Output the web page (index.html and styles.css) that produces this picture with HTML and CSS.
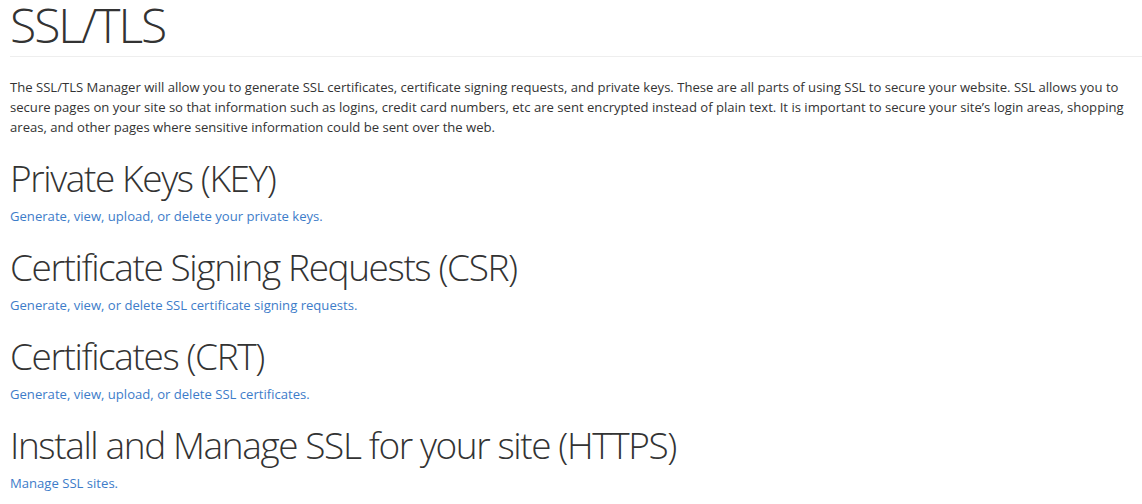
FILE: index.html
```html
<!DOCTYPE html>
<html lang="en">
<head>
  <meta charset="UTF-8" />
  <title>SSL/TLS</title>
  <link rel="stylesheet" href="styles.css">
</head>
<body>
  <div class="page">
    <h1 class="page-title">SSL/TLS</h1>
    <p class="intro">The SSL/TLS Manager will allow you to generate SSL certificates, certificate signing requests, and private keys. These are all parts of using SSL to secure your website. SSL allows you to secure pages on your site so that information such as logins, credit card numbers, etc are sent encrypted instead of plain text. It is important to secure your site’s login areas, shopping areas, and other pages where sensitive information could be sent over the web.</p>

    <div class="section">
      <h2>Private Keys (KEY)</h2>
      <a href="#">Generate, view, upload, or delete your private keys.</a>
    </div>

    <div class="section">
      <h2>Certificate Signing Requests (CSR)</h2>
      <a href="#">Generate, view, or delete SSL certificate signing requests.</a>
    </div>

    <div class="section">
      <h2>Certificates (CRT)</h2>
      <a href="#">Generate, view, upload, or delete SSL certificates.</a>
    </div>

    <div class="section">
      <h2>Install and Manage SSL for your site (HTTPS)</h2>
      <a href="#">Manage SSL sites.</a>
    </div>
  </div>
</body>
</html>
```

FILE: styles.css
```css
body {
  margin: 0;
  font-family: "Open Sans", sans-serif;
  font-size: 13.1px;
  color: #333;
  background: #fff;
}

.page {
  padding: 0 0 0 10px;
}

.page-title {
  font-size: 48px;
  font-weight: 300;
  letter-spacing: -2px;
  line-height: 50px;
  margin: 0;
  padding-bottom: 6px;
  border-bottom: 1px solid #eee;
}

.intro {
  line-height: 20px;
  margin: 20px 0 0;
}

.section {
  margin-top: 19px;
}

.section h2 {
  font-size: 37px;
  font-weight: 300;
  letter-spacing: -1.4px;
  line-height: 44px;
  margin: 0;
}

.section a {
  display: block;
  color: #3d7cc9;
  text-decoration: none;
  line-height: 20px;
  margin-top: 6px;
}
```
